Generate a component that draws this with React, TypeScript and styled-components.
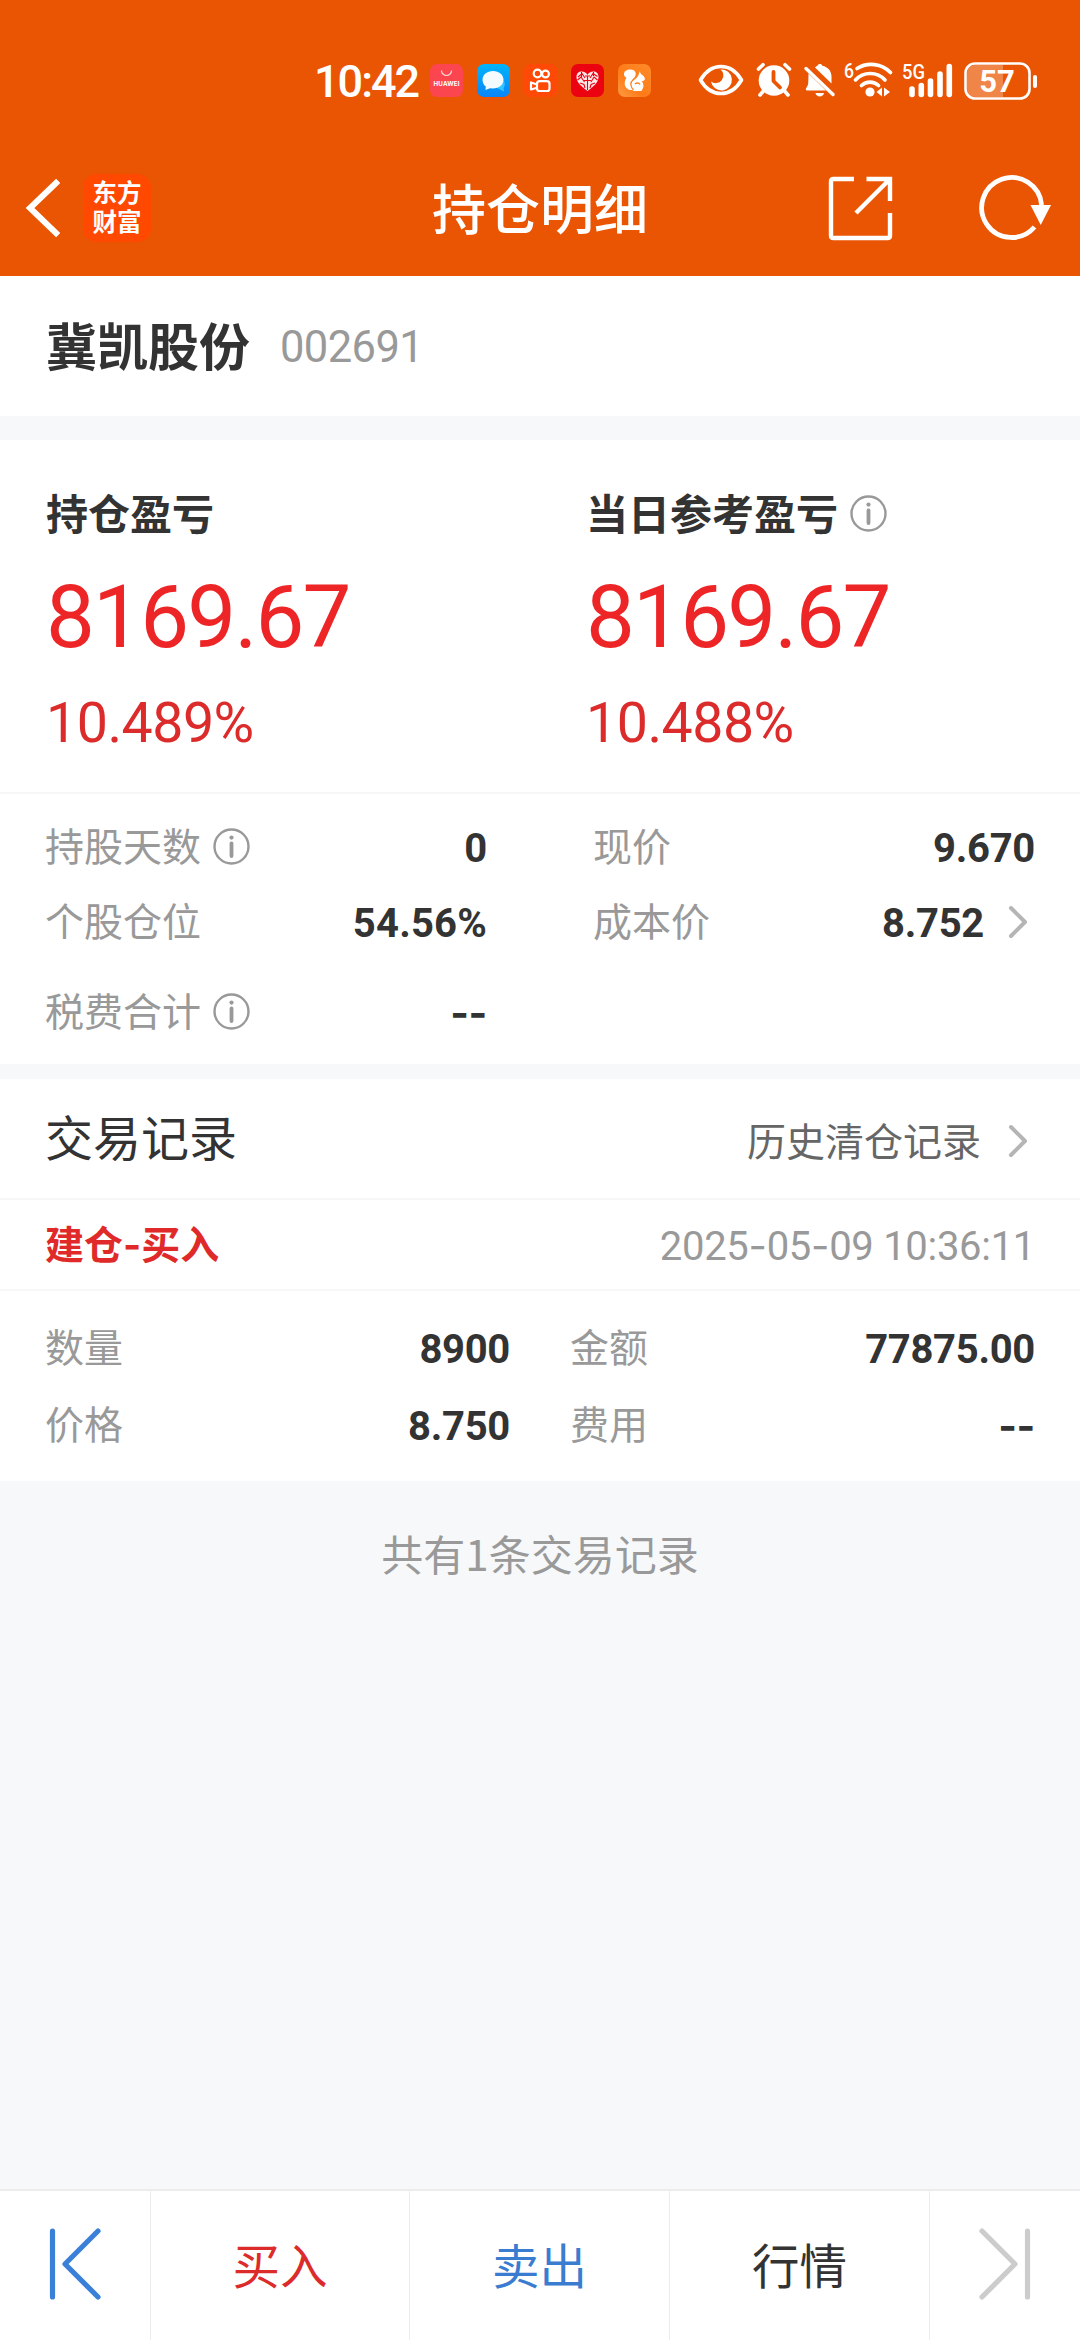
import React from "react";
import styled, { createGlobalStyle } from "styled-components";

const CJK = `"Noto Sans CJK SC", sans-serif`;
const NUM = `Roboto, "Noto Sans CJK SC", sans-serif`;

const GlobalStyle = createGlobalStyle`
  * { box-sizing: border-box; }
  body { margin: 0; background: #f6f8fa; font-family: ${CJK}; }
  svg { display: block; flex: none; overflow: visible; }
`;

const Screen = styled.div`
  width: 1080px;
  height: 2340px;
  display: flex;
  flex-direction: column;
  background: #f6f8fa;
  color: #333;
  overflow: hidden;
`;

/* ---------- top ---------- */
const Top = styled.header`
  height: 276px;
  background: #ea5503;
  color: #fff;
`;
const StatusBar = styled.div`
  height: 140px;
  padding: 60px 43px 0 314px;
  display: flex;
  align-items: flex-start;
`;
const Clock = styled.div`
  width: 116px;
  height: 41px;
  font: 500 45px/43px ${NUM};
  letter-spacing: -2px;
  white-space: nowrap;
`;
const AppIcons = styled.div`
  display: flex;
  gap: 14px;
  padding-top: 4px;
`;
const SystemIcons = styled.div`
  display: flex;
  margin-left: auto;
  padding-top: 2px;
`;
const NavBar = styled.div`
  height: 136px;
  display: grid;
  grid-template-columns: 1fr auto 1fr;
  align-items: center;
`;
const NavLeft = styled.div`
  display: flex;
  align-items: center;
  gap: 23px;
  padding-left: 25px;
`;
const NavRight = styled.div`
  display: flex;
  align-items: center;
  justify-content: flex-end;
  gap: 86px;
  padding-right: 28px;
`;
const NavTitle = styled.h1`
  margin: 0;
  font: 500 54px/80px ${CJK};
  padding-bottom: 2px;
`;
const Brand = styled.div`
  width: 68px;
  height: 68px;
  border-radius: 14px;
  background: #ff4800;
  padding-top: 3px;
  display: flex;
  flex-direction: column;
  align-items: center;
  font: 700 24.5px/29px ${CJK};
`;

/* ---------- shared ---------- */
const Section = styled.section<{ $h: number; $gap?: number }>`
  height: ${(p) => p.$h}px;
  margin-bottom: ${(p) => p.$gap ?? 0}px;
  background: #fff;
`;
const Label = styled.span<{ $size?: number; $color?: string; $bold?: boolean; $lift?: number }>`
  font: ${(p) => (p.$bold ? 700 : 400)} ${(p) => p.$size ?? 39}px/60px ${CJK};
  color: ${(p) => p.$color ?? "#999"};
  padding-bottom: ${(p) => p.$lift ?? 6}px;
  white-space: nowrap;
`;
const Value = styled.span<{ $ls?: number }>`
  margin-left: auto;
  padding-top: 3px;
  font: 700 40px/60px ${NUM};
  letter-spacing: ${(p) => p.$ls ?? -0.3}px;
  color: #333;
`;
const Dash = styled.span`
  font-family: Inter, sans-serif;
`;

/* ---------- stock ---------- */
const StockRow = styled.div`
  height: 140px;
  display: flex;
  align-items: center;
  padding: 0 0 0 46px;
  gap: 30px;
`;
const Code = styled.span`
  font: 400 43.5px/60px ${NUM};
  letter-spacing: -0.6px;
  color: #999;
  padding-top: 3px;
`;

/* ---------- profit ---------- */
const ProfitGrid = styled.div`
  height: 354px;
  display: grid;
  grid-template-columns: 540px 540px;
  padding-top: 43px;
  border-bottom: 2px solid #f7f7f7;
`;
const Profit = styled.div`
  padding-left: 46px;
`;
const ProfitHead = styled.div`
  height: 60px;
  display: flex;
  align-items: center;
  gap: 12px;
`;
const Amount = styled.div`
  font: 400 87px/100px ${NUM};
  letter-spacing: -1.8px;
  color: #ee2526;
  padding-top: 24px;
`;
const Percent = styled.div`
  font: 400 55.5px/70px ${NUM};
  letter-spacing: -0.5px;
  color: #dc2b2b;
  padding-top: 22px;
`;

/* ---------- details ---------- */
const Row = styled.div<{ $mt?: number; $cols: string }>`
  height: 60px;
  margin-top: ${(p) => p.$mt ?? 0}px;
  padding: 0 45px;
  display: grid;
  grid-template-columns: ${(p) => p.$cols};
`;
const Cell = styled.div`
  height: 60px;
  display: flex;
  align-items: center;
`;
const InfoWrap = styled.i`
  margin-left: 12px;
  padding-bottom: 2px;
`;
const Arrow = styled.i<{ $ml: number }>`
  margin-left: ${(p) => p.$ml}px;
  margin-right: 7px;
`;

/* ---------- records ---------- */
const RecordBar = styled.div<{ $h: number }>`
  height: ${(p) => p.$h}px;
  padding: 0 45px;
  display: flex;
  align-items: center;
  justify-content: space-between;
  border-bottom: 2px solid #f7f7f7;
`;
const History = styled.div`
  display: flex;
  align-items: center;
  padding-top: 4px;
`;
const DateText = styled.span`
  font: 400 40px/60px ${NUM};
  letter-spacing: -0.3px;
  color: #999;
  padding-top: 3px;
`;
const Summary = styled.p`
  margin: 42px 0 0;
  text-align: center;
  font: 400 42px/60px ${CJK};
  color: #999;
`;

/* ---------- bottom ---------- */
const TabBar = styled.nav`
  height: 151px;
  margin-top: auto;
  display: grid;
  grid-template-columns: 151px 259px 260px 260px 1fr;
  background: #fff;
  border-top: 2px solid #ececec;
`;
const Tab = styled.div<{ $color?: string }>`
  display: flex;
  align-items: center;
  justify-content: center;
  padding-bottom: 4px;
  font: 400 47.5px/60px ${CJK};
  color: ${(p) => p.$color ?? "#333"};
  border-right: 1px solid #ececec;
  &:last-child { border-right: 0; }
`;

const Info = () => (
  <svg width="37" height="37" viewBox="0 0 37 37" fill="none">
    <circle cx="18.5" cy="18.5" r="17" stroke="#999" strokeWidth="2.4" />
    <circle cx="18.5" cy="9.6" r="2.1" fill="#999" />
    <path d="M18.5 15.5V28" stroke="#999" strokeWidth="3.8" strokeLinecap="round" />
  </svg>
);
const Chevron = () => (
  <svg width="20" height="34" viewBox="0 0 20 34" fill="none">
    <path d="M3 3L17 17L3 31" stroke="#b5b5b5" strokeWidth="4" strokeLinecap="round" strokeLinejoin="round" />
  </svg>
);
const Back = () => (
  <svg width="35" height="58" viewBox="0 0 35 58" fill="none">
    <path d="M31 4L5 29L31 54" stroke="#fff" strokeWidth="6" strokeLinecap="square" />
  </svg>
);
const Share = () => (
  <svg width="65" height="65" viewBox="0 0 65 65" fill="none" stroke="#fff" strokeWidth="4.4">
    <path d="M26 3H5.5Q3 3 3 5.500V59.500Q3 62 5.500 62H59.500Q62 62 62 59.500V37" />
    <path d="M38.500 3H62V25M62 3L28 37" />
  </svg>
);
const Refresh = () => (
  <svg width="73" height="66" viewBox="0 0 73 66" fill="none">
    <path d="M62.600 30A30 30 0 1 0 55.500 52" stroke="#fff" strokeWidth="4.800" />
    <path d="M51.500 30H72L61.700 50Z" fill="#fff" />
  </svg>
);

const Huawei = () => (
  <svg width="33" height="33" viewBox="0 0 33 33">
    <rect width="33" height="33" rx="7" fill="#fb4650" />
    <path d="M11.500 6.500a5 5 0 0 0 10 0" fill="none" stroke="#ffd5d5" strokeWidth="1.200" />
    <text x="16.500" y="21.500" fill="#fff" fontSize="6.200" fontWeight="700" textAnchor="middle" textLength="26" fontFamily="Inter, sans-serif">HUAWEI</text>
  </svg>
);
const Chat = () => (
  <svg width="33" height="33" viewBox="0 0 33 33">
    <defs>
      <linearGradient id="chatBg" x1="0" y1="0" x2="0" y2="1">
        <stop offset="0" stopColor="#00b4fb" />
        <stop offset="1" stopColor="#0a85f8" />
      </linearGradient>
    </defs>
    <rect width="33" height="33" rx="7" fill="url(#chatBg)" />
    <path d="M20 24a6 6 0 0 1 7-7c1.500 3 .5 6-.5 7l.5 3.500-3-1.500Z" fill="#32c5ff" />
    <path d="M16 7c6 0 10.500 3.800 10.500 8.800S22 24.500 16 24.500l-3-.3L8.500 26l.3-3.500C6.600 21 5.500 18.500 5.500 15.800 5.500 10.800 10 7 16 7Z" fill="#f4fbff" />
  </svg>
);
const Kuaishou = () => (
  <svg width="33" height="33" viewBox="0 0 33 33">
    <rect width="33" height="33" rx="7" fill="#ff4906" />
    <g fill="none" stroke="#fff" strokeWidth="2.200">
      <circle cx="13.500" cy="9.500" r="3.800" />
      <circle cx="21.500" cy="10" r="3.400" />
      <rect x="13" y="17.200" width="12.500" height="9.800" rx="2.600" />
      <path d="M13 20.500L7 18.500V25.500L13 23.800" strokeLinejoin="round" />
    </g>
  </svg>
);
const Heart = () => (
  <svg width="33" height="33" viewBox="0 0 33 33">
    <rect width="33" height="33" rx="7" fill="#ec0311" />
    <path d="M16.500 27C10 22 5.500 18.500 5.500 13 5.500 9 8 7.500 10.500 7.500c3 0 5 1.500 6 3.500 1-2 3-3.500 6-3.500 2.500 0 5 1.500 5 5.500 0 5.500-4.500 9-11 14Z" fill="#ffe9e9" />
    <g stroke="#ec0311" strokeWidth="1.100" fill="none">
      <path d="M7 13L11 9.500L14 14M6.500 16L10 13L13.500 18M16.500 12V26M19 14L22 9.500L26.500 12.500M20 18L23 13L26.500 16M9 19L13 20.500L14 24M24 19L20 20.500L19 24M10.500 8V13M22.500 8V12M14 12H19M13 16.500H20" />
    </g>
  </svg>
);
const Squirrel = () => (
  <svg width="33" height="33" viewBox="0 0 33 33">
    <defs>
      <linearGradient id="ucBg" x1="1" y1="0" x2="0" y2="1">
        <stop offset="0" stopColor="#ff8a2a" />
        <stop offset=".6" stopColor="#ff7c18" />
        <stop offset="1" stopColor="#ff9a45" />
      </linearGradient>
    </defs>
    <rect width="33" height="33" rx="7" fill="url(#ucBg)" />
    <path d="M12.500 5.500c4.500 0 6.500 3.500 4.500 7-1.500 2.700-4.500 3.800-4.300 7.300.1 2.700 1.300 4.700 2.800 6.200-5 .7-8.800-2-8.800-6.500 0-3 1.300-4.700 1.800-6C7 13.500 6 12 6 10c0-3 2.700-4.500 6.500-4.500Z" fill="#fff" />
    <path d="M21.500 7.500l2.200 3.300c2 1 3.200 2.700 3.200 4.200 0 1.500-1.700 2-3.200 2.200 2 2 2.300 5.500.8 7.800l-1 2H15.500c-2.500-2-3.700-5-2.300-8 1.500-2.500 3.800-3.500 5.300-5 1.500-1.500 2.500-3.500 3-6.500Z" fill="#fff" />
    <path d="M13.500 17.500c-1.300 3.500-.5 6 2 8.500M17 20c1.500-1.500 4-1.300 5 .5" fill="none" stroke="#ff8426" strokeWidth="1.300" />
  </svg>
);

const Eye = () => (
  <svg width="46" height="36" viewBox="0 0 46 36">
    <path d="M2.500 18C8 8.500 15 4.500 23 4.500S38 8.500 43.500 18C38 27.500 31 31.500 23 31.500S8 27.500 2.500 18Z" fill="none" stroke="#fff" strokeWidth="3.600" strokeLinejoin="round" />
    <path d="M22.500 7.500A10.500 10.500 0 1 1 13 19.500A7.500 7.500 0 0 0 22.500 7.500Z" fill="#fff" />
  </svg>
);
const Alarm = () => (
  <svg width="36" height="36" viewBox="0 0 36 36">
    <circle cx="18" cy="18.500" r="15.300" fill="#fff" />
    <path d="M2.500 7L7 2.700M33.500 7L29 2.700M7 29.500L4 33M29 29.500L32 33" stroke="#fff" strokeWidth="3.600" strokeLinecap="round" />
    <path d="M17.500 10V19L24 25.500" fill="none" stroke="#ea5503" strokeWidth="3.800" strokeLinecap="round" strokeLinejoin="round" />
  </svg>
);
const BellOff = () => (
  <svg width="31" height="36" viewBox="0 0 31 36">
    <path d="M11 5.500C12 4.500 13 4 13.500 3.800 13.800 1.500 18 1.500 18.300 3.800 24 5 27.500 9 27.500 14.500V21.500Z" fill="#fff" />
    <path d="M4.500 11.500L22 28.500H3.200C1.500 28.500 1.500 26.500 2.500 25.500 4 23.500 4.300 22 4.300 19Z" fill="#fff" />
    <path d="M11.500 31H20C19.500 35.500 12 35.500 11.500 31Z" fill="#fff" />
    <path d="M2 6.500L29 32.500" stroke="#fff" strokeWidth="3.400" strokeLinecap="round" />
  </svg>
);
const Wifi = () => (
  <svg width="49" height="36" viewBox="0 0 49 36">
    <text x="0" y="16" fill="#fff" fontSize="20" fontWeight="500" fontFamily="Roboto, sans-serif" textLength="10" lengthAdjust="spacingAndGlyphs">6</text>
    <g fill="none" stroke="#fff" strokeWidth="3.700" strokeLinecap="round">
      <path d="M13 6.500A27 27 0 0 1 46.500 10.500" />
      <path d="M11.500 18A20 20 0 0 1 41 18" />
      <path d="M17.500 23.500A12.500 12.500 0 0 1 34.500 23.500" />
    </g>
    <circle cx="26" cy="30" r="4.600" fill="#fff" />
    <path d="M38 25.500V34.500L32.500 30Z M40 25.500V34.500L46 30Z" fill="#fff" />
  </svg>
);
const Signal = () => (
  <svg width="51" height="36" viewBox="0 0 51 36">
    <text x="0" y="17" fill="#fff" fontSize="20.500" fontWeight="500" fontFamily="Roboto, sans-serif" textLength="23" lengthAdjust="spacingAndGlyphs">5G</text>
    <path d="M10 27V32.500M19.300 23.500V32.500M28.500 19V32.500M38 12V32.500M47.300 4.500V32.500" stroke="#fff" strokeWidth="5.600" strokeLinecap="round" />
  </svg>
);
const Battery = () => (
  <svg width="73" height="38" viewBox="0 0 73 38">
    <path d="M12 3H39V35H12Q3 35 3 26V12Q3 3 12 3Z" fill="#ef8547" />
    <rect x="1.500" y="1.500" width="64" height="35" rx="9.500" fill="none" stroke="#fff" strokeWidth="2.600" />
    <path d="M71 15V24" stroke="#fff" strokeWidth="4" strokeLinecap="round" />
    <text x="33" y="30" fill="#fff" fontSize="31" fontWeight="700" textAnchor="middle" fontFamily="Roboto, sans-serif">57</text>
  </svg>
);
const Spacer = styled.i<{ $w: number }>`
  width: ${(p) => p.$w}px;
`;

const Prev = () => (
  <svg width="54" height="74" viewBox="0 0 54 74" fill="none" stroke="#3a80d8" strokeWidth="5.200" strokeLinecap="round" strokeLinejoin="round">
    <path d="M4.500 4V70M50 4L17 37L50 70" />
  </svg>
);
const Next = () => (
  <svg width="54" height="74" viewBox="0 0 54 74" fill="none" stroke="#ccc" strokeWidth="5.200" strokeLinecap="round" strokeLinejoin="round">
    <path d="M49.500 4V70M4 4L37 37L4 70" />
  </svg>
);

const profits = [
  { label: "持仓盈亏", amount: "8169.67", percent: "10.489%", info: false },
  { label: "当日参考盈亏", amount: "8169.67", percent: "10.488%", info: true },
];
const HOLD_COLS = "442px 106px 442px";
const TRADE_COLS = "465px 60px 465px";

export default function App() {
  return (
    <Screen>
      <GlobalStyle />
      <Top>
        <StatusBar>
          <Clock>10:42</Clock>
          <AppIcons>
            <Huawei />
            <Chat />
            <Kuaishou />
            <Heart />
            <Squirrel />
          </AppIcons>
          <SystemIcons>
            <Eye />
            <Spacer $w={12} />
            <Alarm />
            <Spacer $w={12} />
            <BellOff />
            <Spacer $w={9} />
            <Wifi />
            <Spacer $w={9} />
            <Signal />
            <Spacer $w={11} />
            <Battery />
          </SystemIcons>
        </StatusBar>
        <NavBar>
          <NavLeft>
            <Back />
            <Brand>
              <span>东方</span>
              <span>财富</span>
            </Brand>
          </NavLeft>
          <NavTitle>持仓明细</NavTitle>
          <NavRight>
            <Share />
            <Refresh />
          </NavRight>
        </NavBar>
      </Top>

      <Section $h={140} $gap={24}>
        <StockRow>
          <Label $size={51} $color="#333" $bold $lift={4}>冀凯股份</Label>
          <Code>002691</Code>
        </StockRow>
      </Section>

      <Section $h={624} $gap={15}>
        <ProfitGrid>
          {profits.map((p) => (
            <Profit key={p.label}>
              <ProfitHead>
                <Label $size={42} $color="#333" $bold $lift={3}>{p.label}</Label>
                {p.info && <Info />}
              </ProfitHead>
              <Amount>{p.amount}</Amount>
              <Percent>{p.percent}</Percent>
            </Profit>
          ))}
        </ProfitGrid>
        <Row $mt={23} $cols={HOLD_COLS}>
          <Cell>
            <Label>持股天数</Label>
            <InfoWrap><Info /></InfoWrap>
            <Value>0</Value>
          </Cell>
          <span />
          <Cell><Label>现价</Label><Value>9.670</Value></Cell>
        </Row>
        <Row $mt={15} $cols={HOLD_COLS}>
          <Cell><Label>个股仓位</Label><Value $ls={0.2}>54.56%</Value></Cell>
          <span />
          <Cell><Label>成本价</Label><Value>8.752</Value><Arrow $ml={24}><Chevron /></Arrow></Cell>
        </Row>
        <Row $mt={30} $cols={HOLD_COLS}>
          <Cell>
            <Label>税费合计</Label>
            <InfoWrap><Info /></InfoWrap>
            <Value><Dash>--</Dash></Value>
          </Cell>
        </Row>
      </Section>

      <Section $h={402}>
        <RecordBar $h={121}>
          <Label $size={48} $color="#333" $lift={7}>交易记录</Label>
          <History>
            <Label $color="#666" $lift={4}>历史清仓记录</Label>
            <Arrow $ml={27}><Chevron /></Arrow>
          </History>
        </RecordBar>
        <RecordBar $h={91}>
          <Label $color="#e02a2a" $bold $lift={2}>建仓<Dash>-</Dash>买入</Label>
          <DateText>2025<Dash>-</Dash>05<Dash>-</Dash>09 10:36:11</DateText>
        </RecordBar>
        <Row $mt={27} $cols={TRADE_COLS}>
          <Cell><Label>数量</Label><Value>8900</Value></Cell>
          <span />
          <Cell><Label>金额</Label><Value>77875.00</Value></Cell>
        </Row>
        <Row $mt={17} $cols={TRADE_COLS}>
          <Cell><Label>价格</Label><Value>8.750</Value></Cell>
          <span />
          <Cell><Label>费用</Label><Value><Dash>--</Dash></Value></Cell>
        </Row>
      </Section>

      <Summary>共有1条交易记录</Summary>

      <TabBar>
        <Tab><Prev /></Tab>
        <Tab $color="#dc2b2b">买入</Tab>
        <Tab $color="#3a7dd0">卖出</Tab>
        <Tab>行情</Tab>
        <Tab><Next /></Tab>
      </TabBar>
    </Screen>
  );
}
